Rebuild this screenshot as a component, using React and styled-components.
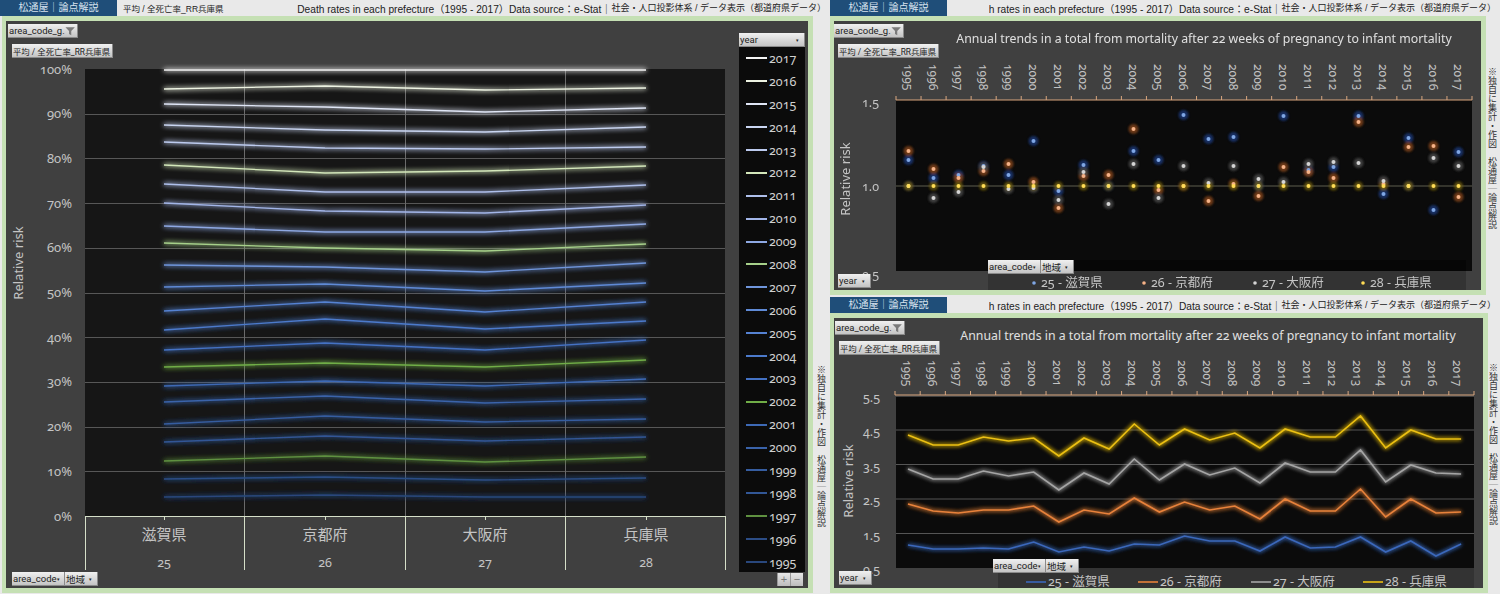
import React from "react";
import styled, { createGlobalStyle } from "styled-components";

const YEARS = [];
for (let y = 1995; y <= 2017; y++) YEARS.push(y);

// y positions of each year's line at the four prefectures
const RELATIVE_LINES = [
  { year: 2017, color: "#f4f4f4", ys: [70, 70, 70, 70] },
  { year: 2016, color: "#edf3e2", ys: [89, 86, 90, 88] },
  { year: 2015, color: "#dfe5f5", ys: [104, 107, 112, 108] },
  { year: 2014, color: "#c9d5f1", ys: [125, 130, 132, 127] },
  { year: 2013, color: "#bccaee", ys: [142, 148, 149, 147] },
  { year: 2012, color: "#d3e7ba", ys: [165, 173, 171, 166] },
  { year: 2011, color: "#aebfeb", ys: [184, 192, 192, 185] },
  { year: 2010, color: "#a2b5e8", ys: [203, 211, 213, 205] },
  { year: 2009, color: "#8ea8e3", ys: [226, 232, 232, 224] },
  { year: 2008, color: "#a6d08a", ys: [243, 248, 251, 244] },
  { year: 2007, color: "#6f95db", ys: [265, 267, 272, 263] },
  { year: 2006, color: "#5f8ad6", ys: [287, 284, 291, 283] },
  { year: 2005, color: "#5582d2", ys: [311, 302, 312, 302] },
  { year: 2004, color: "#4c7acb", ys: [330, 319, 329, 321] },
  { year: 2003, color: "#4472c4", ys: [350, 343, 350, 340] },
  { year: 2002, color: "#70ad47", ys: [367, 363, 367, 360] },
  { year: 2001, color: "#3d69b5", ys: [386, 381, 386, 379] },
  { year: 2000, color: "#3a63aa", ys: [402, 396, 403, 399] },
  { year: 1999, color: "#365da0", ys: [424, 416, 422, 419] },
  { year: 1998, color: "#325796", ys: [442, 436, 441, 437] },
  { year: 1997, color: "#5f9140", ys: [461, 456, 462, 457] },
  { year: 1996, color: "#2c4d86", ys: [479, 477, 480, 478] },
  { year: 1995, color: "#29477c", ys: [497, 495, 497, 497] },
];

const PREFS = [
  { code: 25, name: "滋賀県", x: 164 },
  { code: 26, name: "京都府", x: 325 },
  { code: 27, name: "大阪府", x: 485 },
  { code: 28, name: "兵庫県", x: 646 },
];

const SERIES = {
  blue: { core: "#7fa6e4", halo: "#1b3a78", line: "#3a68bb", haloR: 5 },
  orange: { core: "#f6b287", halo: "#84431c", line: "#e8823a", haloR: 5 },
  grey: { core: "#d4d4d4", halo: "#4a4a4a", line: "#a5a5a5", haloR: 5 },
  yellow: { core: "#ffdc55", halo: "#6d5c10", line: "#ecc012", haloR: 4.5 },
};

const DOTS = {
  blue: [161, 179, 176, 167, 176, 142, 192, 166, 187, 152, 161, 116, 140, 138, 187, 117, 171, 168, 117, 195, 139, 211, 153],
  orange: [152, 170, 179, 172, 165, 183, 209, 177, 176, 130, 191, 187, 202, 185, 197, 168, 173, 179, 123, 185, 148, 147, 198],
  grey: [187, 199, 193, 168, 190, 189, 201, 173, 205, 165, 199, 167, 184, 167, 180, 183, 165, 163, 164, 182, 187, 159, 167],
  yellow: YEARS.map(() => 187),
};

const TREND = {
  blue: [547, 551, 551, 550, 551, 544, 554, 549, 553, 546, 547, 538, 543, 543, 553, 539, 550, 549, 539, 554, 543, 558, 546],
  orange: [506, 513, 515, 512, 512, 508, 524, 512, 516, 500, 514, 504, 512, 508, 521, 501, 513, 513, 491, 519, 501, 515, 514],
  grey: [471, 481, 481, 473, 478, 474, 492, 475, 486, 461, 482, 466, 477, 470, 485, 465, 474, 474, 452, 484, 467, 475, 476],
  yellow: [437, 447, 447, 439, 443, 440, 458, 440, 451, 426, 447, 431, 442, 435, 450, 431, 439, 439, 418, 450, 432, 441, 441],
};

const CHART_TITLE = "Annual trends in a total from mortality after 22 weeks of pregnancy to infant mortality";
const SOURCE_LATIN = "Death rates in each prefecture（1995 - 2017）Data source：e-Stat｜";
const SOURCE_CJK = "社会・人口投影体系 / データ表示（都道府県データ）";
const NOTE_TEXT = "※独自に集計・作図　松通屋｜論点解説";
const SANS = `"Noto Sans", "Noto Sans CJK JP", sans-serif`;

const GlobalStyle = createGlobalStyle`
  html, body {
    margin: 0;
    padding: 0;
    background: #e9e9e9;
    overflow: hidden;
  }
  body {
    font-family: "Liberation Sans", "Noto Sans CJK JP", sans-serif;
  }
`;

function Glow({ id, blur }) {
  return (
    <filter id={id} filterUnits="userSpaceOnUse" x="0" y="0" width="1500" height="600">
      <feGaussianBlur stdDeviation={blur} result="soft" />
      <feMerge>
        <feMergeNode in="soft" />
        <feMergeNode in="soft" />
        <feMergeNode in="SourceGraphic" />
      </feMerge>
    </filter>
  );
}

function RelativeChart() {
  const grid = [114, 158, 203, 248, 293, 337, 382, 427, 471];
  const labels = [100, 90, 80, 70, 60, 50, 40, 30, 20, 10, 0];
  return (
    <ChartSvg viewBox="6 21 729 568" width="729" height="568">
      <defs>
        <Glow id="glowLeft" blur="2.6" />
      </defs>
      <rect x="85" y="69" width="640" height="447" fill="#161616" />
      {grid.map((y) => (
        <line key={y} x1="85" x2="725" y1={y + 0.5} y2={y + 0.5} stroke="#575757" />
      ))}
      {[244, 405, 565].map((x) => (
        <line key={x} x1={x + 0.5} x2={x + 0.5} y1="69" y2="516" stroke="#6a6a6a" />
      ))}
      {RELATIVE_LINES.map((l) => (
        <polyline
          key={l.year}
          points={l.ys.map((y, i) => `${PREFS[i].x},${y}`).join(" ")}
          fill="none"
          stroke={l.color}
          strokeWidth="1.3"
          filter="url(#glowLeft)"
        />
      ))}
      <path d="M85 516.5H725M85.5 516V570M244.5 516V570M405.5 516V570M565.5 516V570M725.5 516V570" stroke="#d5dfc8" strokeWidth="1" fill="none" />
      {PREFS.map((p) => (
        <g key={p.code}>
          <line x1={p.x + 0.5} x2={p.x + 0.5} y1="516" y2="520" stroke="#d5dfc8" />
          <AxisText x={p.x} y="540" textAnchor="middle" fontSize="15">{p.name}</AxisText>
          <AxisText x={p.x} y="567" textAnchor="middle" fontSize="12.5">{p.code}</AxisText>
        </g>
      ))}
      {labels.map((v, i) => (
        <AxisText key={v} x="72" y={73.5 + i * 44.7} textAnchor="end" fontSize="13">{v}%</AxisText>
      ))}
      <AxisText x="23" y="263" textAnchor="middle" fontSize="13" transform="rotate(-90 23 263)">Relative risk</AxisText>
    </ChartSvg>
  );
}

function YearRuler({ left, right, rulerY, labelX, step, labelY }) {
  const count = 23;
  const tick = (right - left) / count;
  return (
    <g>
      <line x1={left} x2={right} y1={rulerY} y2={rulerY} stroke="#d9a67e" strokeWidth="1.2" />
      {Array.from({ length: count + 1 }, (_, i) => (
        <line key={i} x1={left + tick * i} x2={left + tick * i} y1={rulerY - 4} y2={rulerY} stroke="#d9a67e" />
      ))}
      {YEARS.map((year, i) => {
        const x = labelX + step * i;
        return (
          <AxisText key={year} x={x} y={labelY} fontSize="12" transform={`rotate(90 ${x} ${labelY})`} dominantBaseline="middle">
            {year}
          </AxisText>
        );
      })}
    </g>
  );
}

function ScatterChart() {
  return (
    <ChartSvg viewBox="835 22 645 269" width="645" height="269">
      <defs>
        <filter id="haloBlur" filterUnits="userSpaceOnUse" x="0" y="0" width="1500" height="600">
          <feGaussianBlur stdDeviation="0.9" />
        </filter>
      </defs>
      <rect x="897" y="101" width="570" height="171" fill="#0b0b0b" />
      <rect x="1467" y="101" width="6" height="171" fill="#0b0b0b" />
      <rect x="1075" y="261" width="392" height="11" fill="#060606" />
      <rect x="989" y="272" width="478" height="19" fill="#333333" />
      <line x1="897" x2="1473" y1="187" y2="187" stroke="#5e5e4e" strokeWidth="1.2" />
      <YearRuler left={897} right={1473} rulerY={101} labelX={908} step={25} labelY={65} />
      <g filter="url(#haloBlur)">
        {Object.keys(DOTS).map((key) =>
          DOTS[key].map((y, i) => (
            <circle key={key + i} cx={909.5 + 25 * i} cy={y} r={SERIES[key].haloR} fill={SERIES[key].halo} opacity="0.8" />
          ))
        )}
      </g>
      {Object.keys(DOTS).map((key) =>
        DOTS[key].map((y, i) => (
          <circle key={key + i} cx={909.5 + 25 * i} cy={y} r="2" fill={SERIES[key].core} />
        ))
      )}
      <AxisText x="880" y="107.5" textAnchor="end" fontSize="12.5">1.5</AxisText>
      <AxisText x="880" y="191.5" textAnchor="end" fontSize="12.5">1.0</AxisText>
      <AxisText x="880" y="279.5" textAnchor="end" fontSize="12.5">0.5</AxisText>
      <AxisText x="851" y="180" textAnchor="middle" fontSize="13" transform="rotate(-90 851 180)">Relative risk</AxisText>
      <TitleText x="1205" y="44" textAnchor="middle">{CHART_TITLE}</TitleText>
      {[
        [1035, "25 - 滋賀県", "blue"],
        [1145, "26 - 京都府", "orange"],
        [1256, "27 - 大阪府", "grey"],
        [1364, "28 - 兵庫県", "yellow"],
      ].map(([x, text, key]) => (
        <g key={text}>
          <circle cx={x} cy="284" r="1.8" fill={SERIES[key].core} />
          <AxisText x={x + 7} y="288" fontSize="12.5">{text}</AxisText>
        </g>
      ))}
    </ChartSvg>
  );
}

function TrendChart() {
  const px = (i) => 910 + 25.14 * i;
  return (
    <ChartSvg viewBox="836 320 646 270" width="646" height="270">
      <defs>
        <Glow id="glowTrend" blur="2.2" />
      </defs>
      <rect x="898" y="399" width="578" height="171" fill="#0b0b0b" />
      {[432, 466.5, 501, 535.5].map((y) => (
        <line key={y} x1="898" x2="1476" y1={y} y2={y} stroke="#555555" strokeWidth="1.2" />
      ))}
      <rect x="1000" y="570" width="476" height="20" fill="#333333" />
      <YearRuler left={897} right={1476} rulerY={397} labelX={908} step={25} labelY={362} />
      {Object.keys(TREND).map((key) => (
        <polyline
          key={key}
          points={TREND[key].map((y, i) => `${px(i)},${y}`).join(" ")}
          fill="none"
          stroke={SERIES[key].line}
          strokeWidth="1.6"
          filter="url(#glowTrend)"
        />
      ))}
      {["5.5", "4.5", "3.5", "2.5", "1.5", "0.5"].map((v, i) => (
        <AxisText key={v} x="882" y={404 + i * 34.4} textAnchor="end" fontSize="12.5">{v}</AxisText>
      ))}
      <AxisText x="855" y="483" textAnchor="middle" fontSize="13" transform="rotate(-90 855 483)">Relative risk</AxisText>
      <TitleText x="1210" y="342" textAnchor="middle">{CHART_TITLE}</TitleText>
      {[
        [1028, "25 - 滋賀県", "blue"],
        [1140, "26 - 京都府", "orange"],
        [1253, "27 - 大阪府", "grey"],
        [1365, "28 - 兵庫県", "yellow"],
      ].map(([x, text, key]) => (
        <g key={text}>
          <line x1={x} x2={x + 20} y1="584" y2="584" stroke={SERIES[key].line} strokeWidth="1.6" />
          <AxisText x={x + 22} y="587.5" fontSize="12.5">{text}</AxisText>
        </g>
      ))}
    </ChartSvg>
  );
}

function FilterIcon() {
  return (
    <svg width="12" height="12" viewBox="0 0 12 12">
      <path d="M0.5 1.5H11.5L7.3 6V11L4.7 9.6V6Z" fill="#7a7a7a" />
    </svg>
  );
}

function PivotControls({ left, top, legendLeft, legendTop, yearLeft, yearTop }) {
  return (
    <>
      <Pivot $left={left} $top={top}>
        <PivotButton $width={70}>
          area_code_g<Spacer />.<FilterIcon />
        </PivotButton>
      </Pivot>
      <Pivot $left={left + 4} $top={top + 20}>
        <PivotButton $width={101} $size={8.4}>平均 / 全死亡率_RR兵庫県</PivotButton>
      </Pivot>
      <Pivot $left={legendLeft} $top={legendTop}>
        <PivotButton $width={53}>area_code<Spacer /><Caret>▾</Caret></PivotButton>
        <PivotButton $width={33}>地域<Spacer /><Caret>▾</Caret></PivotButton>
      </Pivot>
      {yearLeft !== undefined && (
        <Pivot $left={yearLeft} $top={yearTop}>
          <PivotButton $width={33}>year<Spacer /><Caret>▾</Caret></PivotButton>
        </Pivot>
      )}
    </>
  );
}

function Header({ subtitle, sourceWidth }) {
  return (
    <HeaderBar>
      <BlueTab>松通屋｜論点解説</BlueTab>
      {subtitle && <Subtitle>{subtitle}</Subtitle>}
      <SourceLine $width={sourceWidth}>
        <span>{SOURCE_LATIN}</span>
        <SourceCjk>{SOURCE_CJK}</SourceCjk>
      </SourceLine>
    </HeaderBar>
  );
}

export default function App() {
  return (
    <>
      <GlobalStyle />
      <Page>
        <LeftSheet>
          <Header subtitle="平均 / 全死亡率_RR兵庫県" sourceWidth={545} />
          <SheetBody $inset={2}>
            <Frame $width={811} $height={577} $row>
              <RelativeChart />
              <LegendColumn>
                <LegendBox>
                  <PivotButton $width={66}>year<Spacer /><Caret>▾</Caret></PivotButton>
                  {RELATIVE_LINES.map((l) => (
                    <LegendRow key={l.year}>
                      <Swatch style={{ background: l.color }} />
                      {l.year}
                    </LegendRow>
                  ))}
                </LegendBox>
                <ZoomRow>
                  <ZoomButton>+</ZoomButton>
                  <ZoomButton>−</ZoomButton>
                </ZoomRow>
              </LegendColumn>
              <PivotControls left={2} top={3} legendLeft={6} legendTop={551} />
            </Frame>
            <SideNote $offset={349} $width={15}>{NOTE_TEXT}</SideNote>
          </SheetBody>
        </LeftSheet>
        <RightColumn>
          <RightSheet>
            <Header sourceWidth={511} />
            <SheetBody>
              <Frame $width={656} $height={279}>
                <ScatterChart />
                <PivotControls left={0} top={3} legendLeft={154} legendTop={239} yearLeft={4} yearTop={253} />
              </Frame>
              <SideNote $offset={51} $width={12}>{NOTE_TEXT}</SideNote>
            </SheetBody>
          </RightSheet>
          <RightSheet>
            <Header sourceWidth={511} />
            <SheetBody>
              <Frame $width={658} $height={280}>
                <TrendChart />
                <PivotControls left={1} top={3} legendLeft={159} legendTop={241} yearLeft={5} yearTop={253} />
              </Frame>
              <SideNote $offset={50} $width={9}>{NOTE_TEXT}</SideNote>
            </SheetBody>
          </RightSheet>
        </RightColumn>
      </Page>
    </>
  );
}

const Page = styled.div`
  width: 1500px;
  height: 594px;
  display: grid;
  grid-template-columns: 830px 670px;
  overflow: hidden;
`;
const LeftSheet = styled.section`
  display: flex;
  flex-direction: column;
  min-width: 0;
`;
const RightColumn = styled.div`
  display: flex;
  flex-direction: column;
  gap: 2px;
  min-width: 0;
`;
const RightSheet = styled.section`
  display: flex;
  flex-direction: column;
  min-width: 0;
`;
const HeaderBar = styled.header`
  height: 16px;
  display: flex;
  align-items: center;
  overflow: hidden;
  white-space: nowrap;
  color: #222;
`;
const BlueTab = styled.div`
  flex: 0 0 117px;
  height: 16px;
  line-height: 16px;
  text-align: center;
  background: #1f4e79;
  color: #d6e2ee;
  font-size: 10px;
`;
const Subtitle = styled.div`
  flex: 0 0 auto;
  margin-left: 6px;
  font-size: 8.5px;
`;
const SourceLine = styled.div`
  flex: 0 0 ${(p) => p.$width}px;
  margin-left: auto;
  box-sizing: border-box;
  overflow: hidden;
  display: flex;
  justify-content: flex-end;
  padding-right: 4px;
  font-size: 10.2px;
`;
const SourceCjk = styled.span`
  font-size: 9px;
`;
const SheetBody = styled.div`
  display: flex;
  padding-left: ${(p) => p.$inset || 0}px;
`;
const Frame = styled.div`
  position: relative;
  box-sizing: border-box;
  flex: 0 0 ${(p) => p.$width}px;
  height: ${(p) => p.$height}px;
  display: flex;
  flex-direction: ${(p) => (p.$row ? "row" : "column")};
  background: #404040;
  border: 5px solid #c5e0b4;
  border-left-width: 4px;
`;
const ChartSvg = styled.svg`
  display: block;
  flex: 0 0 auto;
`;
const AxisText = styled.text`
  font-family: ${SANS};
  font-feature-settings: "onum" 1;
  fill: #c4c4c4;
`;
const TitleText = styled.text`
  font-family: ${SANS};
  font-feature-settings: "onum" 1;
  font-size: 12.3px;
  fill: #e0e0e0;
`;
const LegendColumn = styled.div`
  flex: 0 0 66px;
  margin-left: 4px;
  padding-top: 12px;
  display: flex;
  flex-direction: column;
`;
const LegendBox = styled.div`
  height: 539px;
  background: #0b0b0b;
  overflow: hidden;
`;
const LegendRow = styled.div`
  height: 22.9px;
  display: flex;
  align-items: center;
  gap: 2px;
  padding-left: 7px;
  color: #d0d0d0;
  font-family: ${SANS};
  font-feature-settings: "onum" 1;
  font-size: 12.5px;
`;
const Swatch = styled.span`
  width: 21px;
  height: 2px;
`;
const ZoomRow = styled.div`
  display: flex;
  justify-content: flex-end;
  padding-right: 2px;
  margin-top: 1px;
`;
const ZoomButton = styled.div`
  width: 12px;
  height: 13px;
  line-height: 12px;
  text-align: center;
  font-size: 11px;
  color: #777;
  background: linear-gradient(#e6e6e6, #bdbdbd);
  border-left: 1px solid #999;
`;
const SideNote = styled.aside`
  flex: 0 0 ${(p) => p.$width}px;
  box-sizing: border-box;
  margin-top: ${(p) => p.$offset}px;
  writing-mode: vertical-rl;
  white-space: nowrap;
  font-size: 9px;
  line-height: ${(p) => p.$width}px;
  color: #333;
`;
const Pivot = styled.div`
  position: absolute;
  left: ${(p) => p.$left}px;
  top: ${(p) => p.$top}px;
  display: flex;
`;
const PivotButton = styled.div`
  box-sizing: border-box;
  width: ${(p) => p.$width}px;
  height: 14px;
  display: flex;
  align-items: center;
  padding: 0 2px 0 1px;
  font-family: Roboto, "Noto Sans CJK JP", sans-serif;
  font-size: ${(p) => p.$size || 9.5}px;
  color: #222;
  white-space: nowrap;
  background: linear-gradient(#f0f0f0, #c4c4c4);
  border-right: 1px solid #8a8a8a;
  border-bottom: 1px solid #8a8a8a;
`;
const Spacer = styled.span`
  flex: 1;
`;
const Caret = styled.span`
  font-size: 5px;
  padding-right: 3px;
`;
